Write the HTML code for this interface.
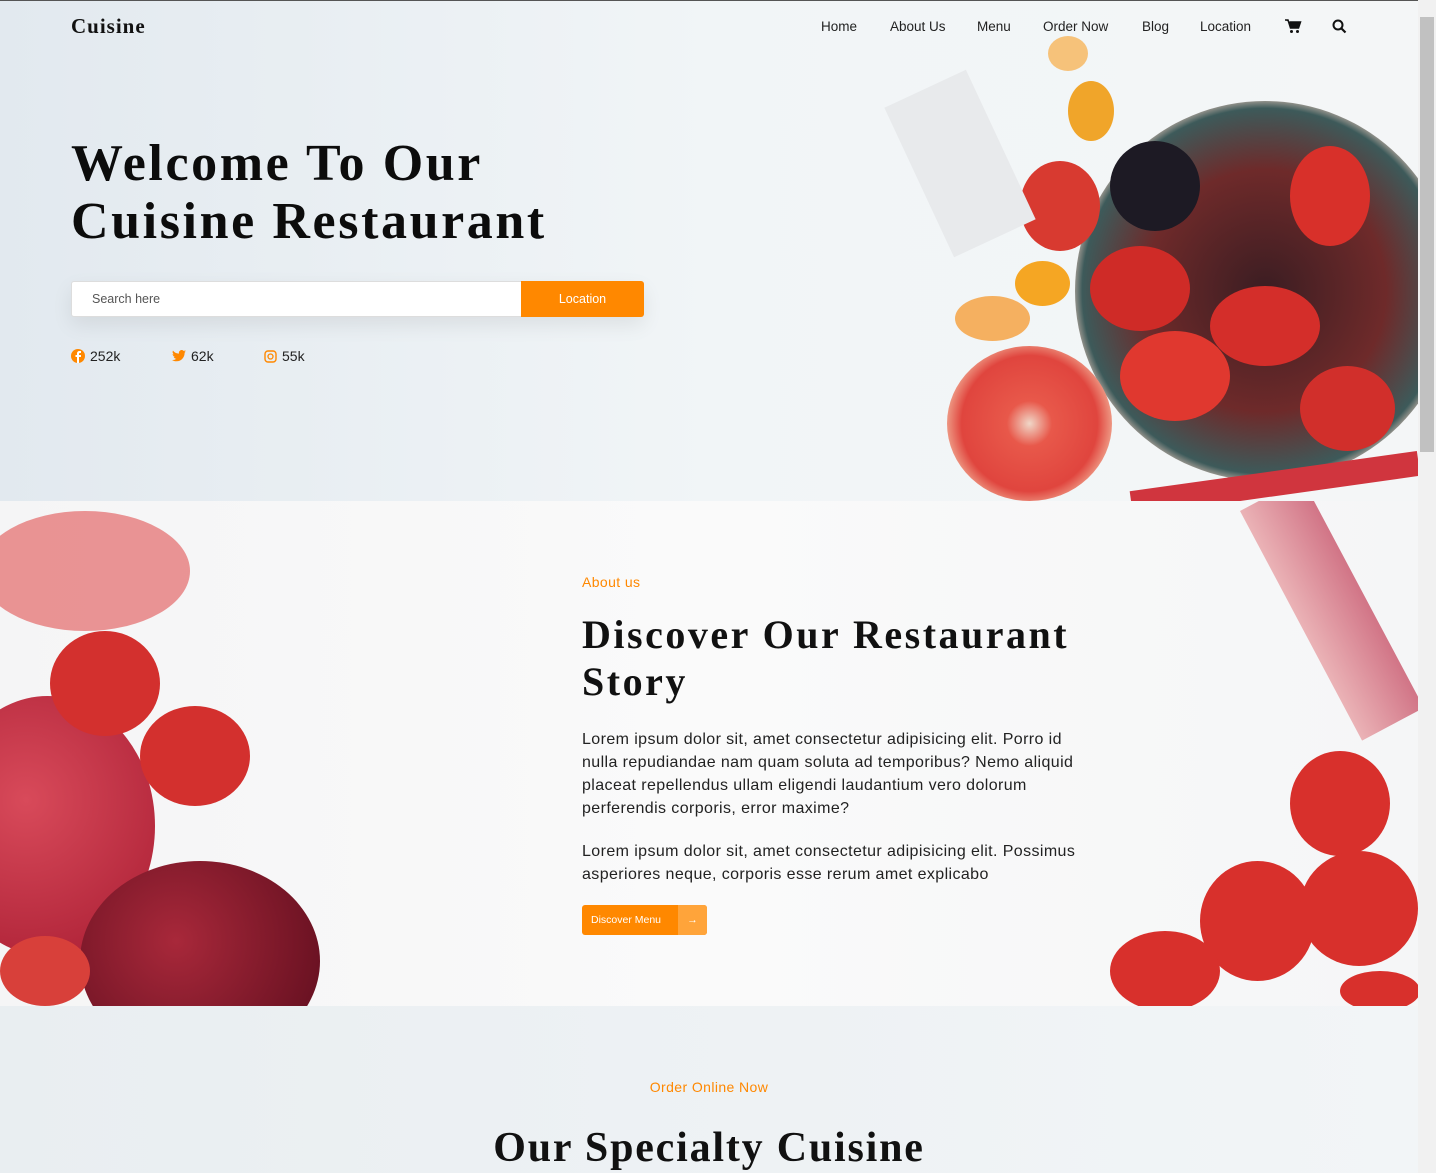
<!DOCTYPE html>
<html><head><meta charset="utf-8"><style>
*{margin:0;padding:0;box-sizing:border-box}
body{width:1436px;height:1173px;overflow:hidden;font-family:"Liberation Sans",sans-serif;background:#fff;position:relative}
.top{position:absolute;left:0;top:0;width:1436px;height:1px;background:#555}
.sb{position:absolute;right:0;top:0;width:18px;height:1173px;background:#f1f1f1}
.sb i{position:absolute;left:2px;top:17px;width:14px;height:435px;background:#c1c1c1}
.hero{position:absolute;left:0;top:1px;width:1418px;height:500px;background:linear-gradient(90deg,#e2e9ef,#f1f5f7 50%,#f4f6f7);overflow:hidden}
.logo{position:absolute;left:71px;top:14px;font:bold 21px "Liberation Serif",serif;color:#111;letter-spacing:1px}
nav{position:absolute;top:19px;left:821px;font-size:13.5px;color:#222}
nav span{position:absolute;white-space:nowrap}
h1{position:absolute;left:71px;top:135px;font:bold 52px/58px "Liberation Serif",serif;color:#0c0c0c;letter-spacing:2.6px}
.search{position:absolute;left:71px;top:281px;width:573px;height:36px;background:#fff;border:1px solid #ddd;border-radius:3px;box-shadow:0 8px 20px rgba(0,0,0,.08)}
.search span{position:absolute;left:20px;top:10px;font-size:12.5px;color:#555}
.search b{position:absolute;right:-1px;top:-1px;width:123px;height:36px;background:#ff8800;color:#fff;font-size:12.5px;font-weight:normal;text-align:center;line-height:36px;border-radius:0 3px 3px 0}
.soc{position:absolute;top:348px;font-size:14px;color:#222;display:flex;align-items:center;gap:5px}
.dot{border-radius:50%;position:absolute}
.about{position:absolute;left:0;top:501px;width:1418px;height:505px;background:linear-gradient(90deg,#f5f5f6,#fafafa 50%,#f5f6f7);overflow:hidden}
.ab{position:absolute;left:582px;color:#111}
.sec3{position:absolute;left:0;top:1006px;width:1418px;height:167px;background:linear-gradient(90deg,#e9eef1,#f2f5f7)}
.p{font-size:16px;letter-spacing:.4px;line-height:23px;color:#222;width:520px}
</style></head><body>
<div class="hero">
 <div class="dot" style="left:1075px;top:100px;width:380px;height:380px;background:radial-gradient(circle,#3b1d22 0,#6e2a2a 45%,#3d5a5a 68%,#b8aaa0 72%,transparent 74%)"></div>
 <div class="dot" style="left:1110px;top:140px;width:90px;height:90px;background:#1d1a24"></div>
 <div class="dot" style="left:1290px;top:145px;width:80px;height:100px;background:#d8302a"></div>
 <div class="dot" style="left:1090px;top:245px;width:100px;height:85px;background:#cf2b27"></div>
 <div class="dot" style="left:1210px;top:285px;width:110px;height:80px;background:#d42e2a"></div>
 <div class="dot" style="left:1120px;top:330px;width:110px;height:90px;background:#e0382f"></div>
 <div class="dot" style="left:1300px;top:365px;width:95px;height:85px;background:#d12f2b"></div>
 <div class="dot" style="left:947px;top:345px;width:165px;height:155px;background:radial-gradient(circle,#f0d7c8 0,#e8584a 20%,#e0453e 60%,#f5c4a8 80%,#f2b28f 100%)"></div>
 <div class="dot" style="left:1020px;top:160px;width:80px;height:90px;background:#d83a30"></div>
 <div class="dot" style="left:1068px;top:80px;width:46px;height:60px;background:#f0a52a"></div>
 <div class="dot" style="left:968px;top:172px;width:50px;height:50px;background:#f19a20"></div>
 <div class="dot" style="left:1015px;top:260px;width:55px;height:45px;background:#f5a623"></div>
 <div class="dot" style="left:955px;top:295px;width:75px;height:45px;background:#f5b060"></div>
 <div class="dot" style="left:1048px;top:35px;width:40px;height:35px;background:#f6c27a"></div>
 <div style="position:absolute;left:915px;top:80px;width:90px;height:165px;background:#e8eaec;transform:rotate(-25deg)"></div>
 <div style="position:absolute;left:1130px;top:470px;width:290px;height:25px;background:#d0353e;transform:rotate(-8deg)"></div>
</div>
<div class="logo">Cuisine</div>
<nav><span style="left:0">Home</span><span style="left:69px">About Us</span><span style="left:156px">Menu</span><span style="left:222px">Order Now</span><span style="left:321px">Blog</span><span style="left:379px">Location</span>
<svg style="position:absolute;left:464px;top:0" width="17" height="15" viewBox="0 0 17 15"><path d="M0 1h3l2.5 8h8l2-6H4.5" fill="#111" stroke="#111" stroke-width="1.5"/><circle cx="6.5" cy="12.5" r="1.5" fill="#111"/><circle cx="12.5" cy="12.5" r="1.5" fill="#111"/></svg>
<svg style="position:absolute;left:511px;top:0" width="15" height="15" viewBox="0 0 15 15"><circle cx="6" cy="6" r="4.5" fill="none" stroke="#111" stroke-width="2"/><path d="M9.5 9.5l4 4" stroke="#111" stroke-width="2.2"/></svg></nav>
<h1>Welcome To Our<br>Cuisine Restaurant</h1>
<div class="search"><span>Search here</span><b>Location</b></div>
<div class="soc" style="left:71px"><svg width="14" height="14"><circle cx="7" cy="7" r="7" fill="#ff8800"/><path d="M8 14V8h2V6H8V5c0-.6.3-1 1-1h1V2H8.5C7 2 6 3 6 4.5V6H4.5v2H6v6" fill="#fff"/></svg>252k</div>
<div class="soc" style="left:172px"><svg width="14" height="12" viewBox="0 0 14 12"><path d="M14 1.5c-.5.2-1 .4-1.6.4.6-.4 1-.9 1.2-1.6-.6.3-1.1.6-1.8.7A2.8 2.8 0 007 3.6 8 8 0 011 .6a2.8 2.8 0 00.9 3.8c-.5 0-.9-.2-1.3-.4 0 1.4 1 2.5 2.3 2.8-.4.1-.9.1-1.300 0 .4 1.1 1.4 2 2.7 2A5.7 5.7 0 010 10c1.3.8 2.7 1.3 4.4 1.3 5.3 0 8.2-4.4 8.2-8.2v-.4c.6-.4 1-.9 1.4-1.4z" fill="#ff8800"/></svg>62k</div>
<div class="soc" style="left:264px"><svg width="13" height="13"><rect x="1" y="1" width="11" height="11" rx="3" fill="none" stroke="#ff8800" stroke-width="1.4"/><circle cx="6.5" cy="6.5" r="2.5" fill="none" stroke="#ff8800" stroke-width="1.3"/></svg>55k</div>

<div class="about">
 <div class="dot" style="left:-60px;top:195px;width:215px;height:260px;background:radial-gradient(circle at 40% 40%,#d84a5a,#a81c32)"></div>
 <div class="dot" style="left:80px;top:360px;width:240px;height:200px;background:radial-gradient(circle at 40% 40%,#a8283a,#5a0c1c)"></div>
 <div class="dot" style="left:50px;top:130px;width:110px;height:105px;background:#d3302e"></div>
 <div class="dot" style="left:140px;top:205px;width:110px;height:100px;background:#d3302e"></div>
 <div class="dot" style="left:-20px;top:10px;width:210px;height:120px;background:#e46a6a;opacity:.7"></div>
 <div class="dot" style="left:0px;top:435px;width:90px;height:70px;background:#d8403a"></div>
 <div class="dot" style="left:1290px;top:250px;width:100px;height:105px;background:#d8302c"></div>
 <div class="dot" style="left:1200px;top:360px;width:115px;height:120px;background:#d8302c"></div>
 <div class="dot" style="left:1300px;top:350px;width:118px;height:115px;background:#d8302c"></div>
 <div class="dot" style="left:1110px;top:430px;width:110px;height:80px;background:#d8302c"></div>
 <div class="dot" style="left:1340px;top:470px;width:80px;height:40px;background:#d8302c"></div>
 <div style="position:absolute;left:1240px;top:10px;width:70px;height:260px;background:linear-gradient(90deg,#e8a2a6,#c8546a);transform:rotate(-28deg);transform-origin:top left;opacity:.8"></div>
 <div class="ab" style="top:73px;color:#ff8800;font-size:14px;letter-spacing:.4px">About us</div>
 <div class="ab" style="top:110px;font:bold 40px/47px 'Liberation Serif',serif;letter-spacing:2.5px;white-space:nowrap">Discover Our Restaurant<br>Story</div>
 <div class="ab p" style="top:227px">Lorem ipsum dolor sit, amet consectetur adipisicing elit. Porro id nulla repudiandae nam quam soluta ad temporibus? Nemo aliquid placeat repellendus ullam eligendi laudantium vero dolorum perferendis corporis, error maxime?</div>
 <div class="ab p" style="top:339px">Lorem ipsum dolor sit, amet consectetur adipisicing elit. Possimus asperiores neque, corporis esse rerum amet explicabo</div>
 <div class="ab" style="top:404px;width:125px;height:30px;background:#ff8800;border-radius:3px;color:#fff;font-size:10.5px;line-height:30px;padding-left:9px">Discover Menu<span style="position:absolute;right:0;top:0;width:29px;height:30px;background:#ffa43a;text-align:center;border-radius:0 3px 3px 0">→</span></div>
</div>
<div class="sec3">
 <div style="position:absolute;left:0;width:1418px;top:73px;text-align:center;color:#ff8800;font-size:14px;letter-spacing:.4px">Order Online Now</div>
 <div style="position:absolute;left:0;width:1418px;top:118px;text-align:center;font:bold 42px 'Liberation Serif',serif;color:#111;letter-spacing:1.8px">Our Specialty Cuisine</div>
</div>
<div class="top"></div>
<div class="sb"><i></i></div>
</body></html>
